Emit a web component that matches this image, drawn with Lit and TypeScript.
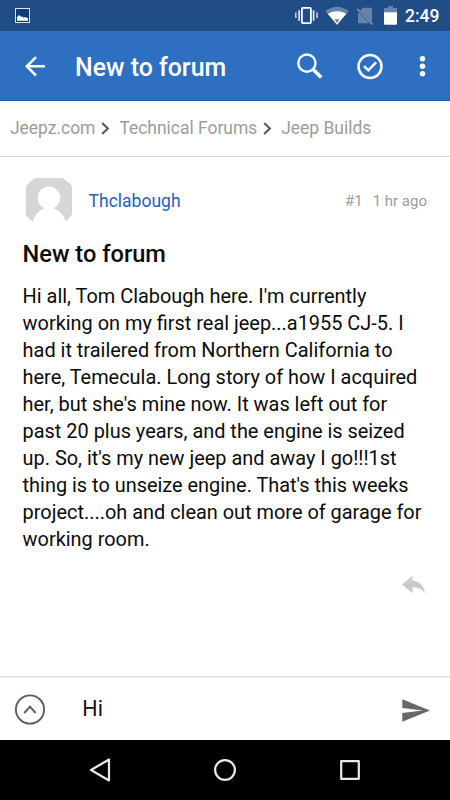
import { LitElement, html, css } from "lit";
import { customElement } from "lit/decorators.js";

const BODY_LINES = [
  "Hi all, Tom Clabough here. I'm currently",
  "working on my first real jeep...a1955 CJ-5. I",
  "had it trailered from Northern California to",
  "here, Temecula. Long story of how I acquired",
  "her, but she's mine now. It was left out for",
  "past 20 plus years, and the engine is seized",
  "up. So, it's my new jeep and away I go!!!1st",
  "thing is to unseize engine. That's this weeks",
  "project....oh and clean out more of garage for",
  "working room.",
];

@customElement("status-bar")
class StatusBar extends LitElement {
  static styles = css`
    :host { display: flex; align-items: flex-start; height: 31px; background: #204d86; color: #fff; }
    svg { display: block; flex: none; }
    .grow { flex: 1; }
    .time { font-size: 17.5px; font-weight: 500; line-height: 33px; width: 45px; white-space: nowrap; }
  `;
  render() {
    return html`
      <svg width="45" height="31" viewBox="0 0 45 31">
        <rect x="15.5" y="8.5" width="14" height="14" fill="#103c77" stroke="#dfe6ef" />
        <path d="M17 20.7v-3.6l2-2 2 1.6 1.2-.2 1.3 1.2 1.5-.6 3 1.2v2.4z" fill="#fff" />
      </svg>
      <div class="grow"></div>
      <svg width="110" height="31" viewBox="295 0 110 31">
        <rect x="301.9" y="7.9" width="9" height="15.2" rx=".8" fill="none" stroke="#fff" stroke-width="1.8" />
        <path d="M299.1 10.3v10.4M313.6 10.3v10.4" stroke="#fff" stroke-width="1.5" />
        <path d="M295.8 12.5v5.5M317 12.5v5.5" stroke="#d5deea" stroke-width="1.4" />
        <path d="M325.3 11.3Q337 2.3 348.8 11.3L337 24.8z" fill="#6784ac" />
        <path d="M327.8 13.7Q337 8.8 346.3 13.7L337 24.8z" fill="#fff" />
        <path d="M334.6 19.2h5L337 23.2z" fill="#777c84" />
        <path d="M363 7.8h7.8q1.2 0 1.2 1.2v14.3h-14V13z" fill="#6784ac" />
        <path d="M357.7 9.9l15 14.8" stroke="#204d86" stroke-width="2.4" />
        <path d="M357.2 9l15.5 15.4" stroke="#8299b9" stroke-width="1.4" />
        <path d="M388 6h5v2h4v4.4h-13V8h4z" fill="#6784ac" />
        <path d="M384 12.2h13v11.5q0 1-1 1h-11q-1 0-1-1z" fill="#fff" />
      </svg>
      <div class="time">2:49</div>
    `;
  }
}

@customElement("app-bar")
class AppBar extends LitElement {
  static styles = css`
    :host { display: flex; box-sizing: border-box; height: 70px; background: #2e6fc1; border-bottom: 1px solid #0e5db9; color: #fff; }
    svg { display: block; flex: none; }
    .title { flex: 1; padding-left: 5px; font-size: 24.9px; font-weight: 500; line-height: 73px; white-space: nowrap; }
  `;
  render() {
    return html`
      <svg width="70" height="69" viewBox="0 31 70 69" fill="none" stroke="#fff" stroke-width="2.5">
        <path d="M45 66.3H27M36 57.1l-9.2 9.2 9.2 9.2" />
      </svg>
      <div class="title">New to forum</div>
      <svg width="160" height="69" viewBox="290 31 160 69" fill="none" stroke="#fff">
        <circle cx="306.9" cy="63.1" r="8.6" stroke-width="2.4" />
        <path d="M313 69.3l8.2 8.2" stroke-width="3.6" />
        <circle cx="370" cy="66.5" r="11.5" stroke-width="2.5" />
        <path d="M364.1 66.2l4.2 4.2 7.8-8" stroke-width="2.4" />
        <g fill="#fff" stroke="none">
          <circle cx="422.5" cy="58.8" r="2.7" /><circle cx="422.5" cy="66.3" r="2.7" /><circle cx="422.5" cy="73.8" r="2.7" />
        </g>
      </svg>
    `;
  }
}

@customElement("forum-post")
class ForumPost extends LitElement {
  static styles = css`
    :host { display: flex; flex-direction: column; flex: 1; padding: 21px 23px 0 22.6px; }
    .head { display: flex; align-items: center; height: 46px; }
    svg { display: block; flex: none; }
    .name { flex: 1; padding-left: 17px; font-size: 17.5px; line-height: 46px; color: #1f5fbd; }
    .meta { display: flex; gap: 10px; font-size: 15px; line-height: 46px; color: #9b9b9b; }
    h1 { margin: 14px 0 0; font-size: 23.6px; font-weight: 500; line-height: 32px; color: #0c0808; white-space: nowrap; }
    .body { padding-top: 13px; font-size: 19.92px; line-height: 27px; color: #0b0b0b; white-space: nowrap; }
    .actions { display: flex; justify-content: flex-end; padding-top: 21px; }
  `;
  render() {
    return html`
      <div class="head">
        <svg width="49" height="46" viewBox="23 178 49 46">
          <path d="M36.500 178h24.500q1.700 0 3 .900l6.500 5.400q1.500 1.500 1.500 3.500v26q0 1-.700 1.700L65.800 221.500Q62 211 53.200 208.300A11.300 11.300 0 1 0 44.600 208.300Q36 211 32.600 221.700L26.500 216q-.700-.800-.700-2v-26q0-2 1.300-3.300l6.400-5.700q1.300-1 3-1z" fill="#d6d6d6" />
        </svg>
        <div class="name">Thclabough</div>
        <div class="meta"><span>#1</span><span>1 hr ago</span></div>
      </div>
      <h1>New to forum</h1>
      <div class="body">${BODY_LINES.map((l) => html`<div>${l}</div>`)}</div>
      <div class="actions">
        <svg width="25" height="22" viewBox="402 574 25 22">
          <path d="M402 584.500L412.500 575.800v5q10.500.5 12.500 12.700-3.500-6.500-12.500-6.300v5.700z" fill="#c9c9c9" />
        </svg>
      </div>
    `;
  }
}

@customElement("app-root")
class AppRoot extends LitElement {
  static styles = css`
    :host { display: flex; flex-direction: column; width: 450px; height: 800px; overflow: hidden; background: #fff; font-family: Roboto, sans-serif; }
    svg { display: block; flex: none; }
    .crumbs { display: flex; align-items: center; box-sizing: border-box; height: 56px; padding-left: 10px; border-bottom: 1px solid #d4d4d4; font-size: 17.45px; line-height: 55px; color: #9c9c9c; white-space: nowrap; }
    .chev { margin: 0 9px 0 6px; }
    .reply { display: flex; align-items: center; box-sizing: border-box; height: 64px; border-top: 1px solid #dfdfdf; box-shadow: inset 0 1px #f4f4f4; }
    .draft { flex: 1; padding-left: 22.3px; font-size: 21.5px; line-height: 63px; color: #111; }
    .nav { height: 60px; background: #000; }
  `;
  private chevron() {
    return html`<svg class="chev" width="9" height="13" viewBox="0 0 9 13">
      <path d="M1.200 1l5.700 5.500L1.200 12" fill="none" stroke="#555" stroke-width="2" />
    </svg>`;
  }
  render() {
    return html`
      <status-bar></status-bar>
      <app-bar></app-bar>
      <div class="crumbs">
        <span>Jeepz.com</span>${this.chevron()}<span>Technical Forums</span>${this.chevron()}<span>Jeep Builds</span>
      </div>
      <forum-post></forum-post>
      <div class="reply">
        <svg width="60" height="63" viewBox="0 677 60 63" fill="none" stroke="#5e5e5e">
          <circle cx="30" cy="709.500" r="14.100" stroke-width="1.900" />
          <path d="M24.300 713l5.700-6.300 5.700 6.300" stroke-width="2" />
        </svg>
        <div class="draft">Hi</div>
        <svg width="60" height="63" viewBox="390 677 60 63">
          <path d="M402.300 699.300L430 710.500 402.300 721.700v-8.700l20.500-2.500-20.500-2.400z" fill="#686868" />
        </svg>
      </div>
      <svg class="nav" width="450" height="60" viewBox="0 740 450 60" fill="none" stroke="#e9e9e9" stroke-width="2.200" stroke-linejoin="round">
        <path d="M109 759.500v21L91 770z" />
        <circle cx="225" cy="770" r="9.900" />
        <rect x="341.200" y="761.200" width="17.600" height="17.600" />
      </svg>
    `;
  }
}
